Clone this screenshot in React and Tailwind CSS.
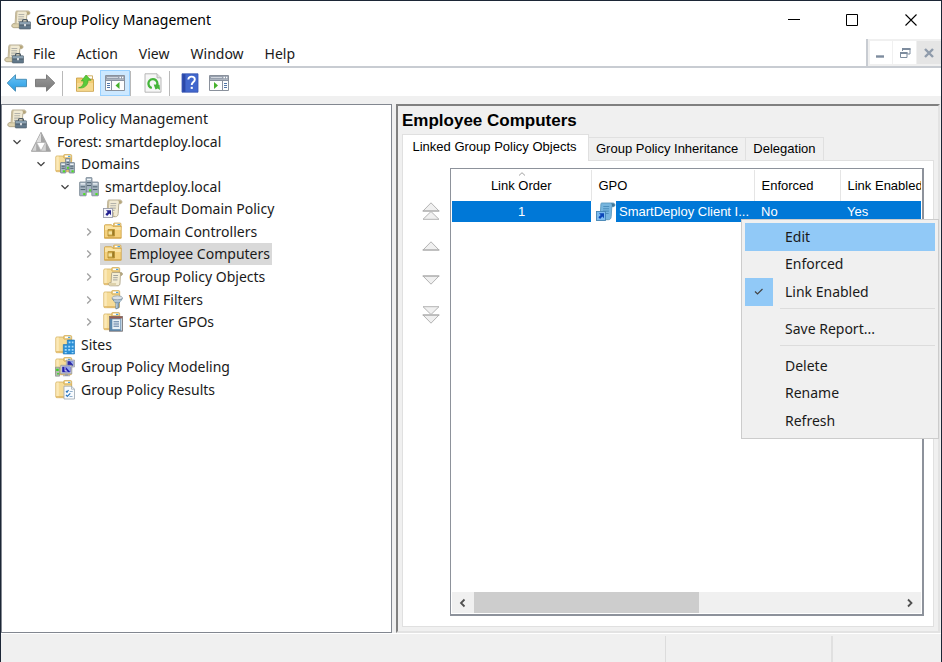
import clsx from 'clsx'

/* ---------- icons ---------- */

function Svg({ size = 'size-5', box = '0 0 20 20', className, children }) {
  return (
    <svg viewBox={box} className={clsx(size, 'shrink-0', className)} fill="none" aria-hidden="true">
      {children}
    </svg>
  )
}

function ScrollShape() {
  return (
    <>
      <path d="M5.5 1h11.300c1.300 0 2.100.8 2.100 1.900s-.8 1.800-1.900 1.800h-1.200l-.6 9.800c-.1 2-1 3.200-2.600 3.200H3c-1.400 0-2.200-.9-2.200-2s.8-2.100 2-2.100h1.300l.6-9.500c0-1.900.3-3.100.8-3.100z" fill="#f1ead3" stroke="#b0a68b" strokeWidth=".9" />
      <path d="M4.900 2.500c0-.8.300-1.500.8-1.500h1.500c-.7.500-.9 1.500-.9 3l-.7 9.700H4.100z" fill="#c9bd9c" />
      <path d="M14.800 1.300c1 .5 1.200 1.700 1.100 3.300l1.500-.1c1-.1 1.500-.8 1.400-1.600-.1-.9-.8-1.500-1.800-1.500z" fill="#b7a77c" />
      <path d="M2.800 13.800h8.200c-.9.900-.8 2.900.6 3.700H3.200c-1.300 0-2-.8-2-1.800s.7-1.900 1.600-1.900z" fill="#ddd2ae" stroke="#a79c7d" strokeWidth=".5" />
      <path d="M7.500 4.500h5.800M7.300 6.800h5.800M7.200 9.100h5.600M7 11.400h4.600" stroke="#b3b2aa" strokeWidth="1.100" />
    </>
  )
}

function ConsoleIcon() {
  return (
    <Svg>
      <ScrollShape />
      <path d="M11.500 12v-1c0-.8.500-1.300 1.300-1.300h2.400c.8 0 1.300.5 1.300 1.300v1" stroke="#4b5862" strokeWidth="1.200" />
      <rect x="8.300" y="11.800" width="11.300" height="7.200" rx=".6" fill="#607789" stroke="#4c5c68" strokeWidth=".6" />
      <path d="M8.700 12.200h10.500v2.500H8.700z" fill="#8ea4b4" />
      <path d="M8.500 15h11" stroke="#465763" strokeWidth=".8" />
      <path d="M13.100 14h1.800v2.200h-1.800z" fill="#e2e5e8" />
    </Svg>
  )
}

function ShortcutArrow({ paper, edge, arrow }) {
  return (
    <>
      <rect x=".5" y="9.500" width="9" height="9" fill={paper} stroke={edge} strokeWidth=".9" />
      <path d="M3 11.200h5v5l-1.600-1.600-2.300 2.300-1.700-1.700 2.300-2.300z" fill={arrow} />
    </>
  )
}

function GpoLinkIcon() {
  return (
    <Svg>
      <ScrollShape />
      <ShortcutArrow paper="#f5f5fa" edge="#9a9ca8" arrow="#22208f" />
    </Svg>
  )
}

// Same link icon, tinted by the selection
function GpoLinkSelectedIcon() {
  return (
    <Svg>
      <path d="M5.500 1h11.300c1.300 0 2.100.8 2.100 1.900s-.8 1.800-1.900 1.800h-1.200l-.6 9.800c-.1 2-1 3.200-2.600 3.200H3.200l1-4.200.6-9.400c0-1.900.2-3.100.7-3.100z" fill="#77b5de" stroke="#5c98bd" strokeWidth=".9" />
      <path d="M14.800 1.300c1 .5 1.200 1.700 1.100 3.300l1.500-.1c1-.1 1.500-.8 1.400-1.600-.1-.9-.8-1.500-1.800-1.500z" fill="#3f7698" />
      <path d="M7.300 4.500h5.900M7.100 6.800H13M6.900 9.100h6M10 11.500h2.600" stroke="#4c8fbd" strokeWidth="1.100" />
      <ShortcutArrow paper="#7dbcf0" edge="#4585b3" arrow="#0c46b8" />
    </Svg>
  )
}

function FolderShape() {
  return (
    <>
      <path d="M8.500 3.500V1.700c0-.7.500-1.200 1.200-1.200h5.800c.7 0 1.200.5 1.200 1.200v5.500H8.500z" fill="#edcb7c" stroke="#cfa955" strokeWidth=".7" />
      <path d="M10 1.500h5.500v1.700H10z" fill="#fff" />
      <path d="M13 1.800h2.300V3H13z" fill="#4ea3dc" />
      <path d="M.8 3c0-.6.4-1 1-1h5.500c.6 0 .9.300 1.100.8l.7 1.400h7.400v12.500c0 .6-.4 1-1 1H1.800c-.6 0-1-.4-1-1z" fill="#f6dc98" stroke="#d3ae5c" strokeWidth=".8" />
      <path d="M1.300 2.900c0-.3.200-.5.500-.5h2v14.800h-2c-.3 0-.5-.2-.5-.5z" fill="#fbe9b8" />
      <path d="M1 16.800h15.500" stroke="#e0b765" strokeWidth="1.200" />
    </>
  )
}

function OuIcon() {
  return (
    <Svg>
      <path d="M10.500 3.500V1.900c0-.5.400-.9.900-.9h5.700c.5 0 .9.400.9.900v3.500h-7.500z" fill="#edcb7c" stroke="#cba24a" strokeWidth=".7" />
      <path d="M12 1.800h5.200v1.500H12z" fill="#fff" />
      <path d="M14.500 2H17v1.200h-2.500z" fill="#4ea3dc" />
      <path d="M1.500 3.500c0-.5.300-.8.800-.8h6.200L10 4.200h8.200v12H1.500z" fill="#f5d17c" stroke="#cc9f43" strokeWidth=".8" />
      <path d="M2 3.700h6L9.500 5h8.200v3H2z" fill="#fae3a5" />
      <path d="M1.700 15.800h16.400" stroke="#d3a549" strokeWidth="1" />
      <path d="M5 7.500h6.500V14H5z" fill="#cfa947" stroke="#b18a2d" strokeWidth=".8" />
      <path d="M5.500 9.300H9v3.200H5.500z" fill="#f5e3a0" />
      <path d="M9.300 8h1.700v5.500H9.300z" fill="#9a7a25" />
    </Svg>
  )
}

function Tower({ x, y, w, h }) {
  return (
    <g>
      <rect x={x} y={y} width={w} height={h} rx=".5" fill="#a7b6c2" stroke="#6b7a87" strokeWidth=".7" />
      <path d={`M${x + 1} ${y + 1.2}h${w - 2}v1.300h-${w - 2}z`} fill="#eef3f6" />
      <path d={`M${x + 1} ${y + h * 0.35}h${w - 2}M${x + 1} ${y + h * 0.55}h${w - 2}`} stroke="#4d5f6e" strokeWidth="1" />
      <rect x={x + w - 3} y={y + h - 2.7} width="2.200" height="2" fill="#4be01f" />
    </g>
  )
}

function DomainIcon() {
  return (
    <Svg>
      <Tower x={7} y={0.6} w={6} h={14.5} />
      <Tower x={0.6} y={5} w={6.6} h={13.8} />
      <Tower x={12.8} y={5} w={6.6} h={13.8} />
    </Svg>
  )
}

function DomainsIcon() {
  return (
    <Svg>
      <FolderShape />
      <Tower x={10.5} y={4.500} w={4.5} h={11} />
      <Tower x={5.5} y={8.500} w={5.3} h={10.5} />
      <Tower x={14.200} y={8.500} w={5.3} h={10.5} />
    </Svg>
  )
}

function ForestIcon() {
  return (
    <Svg>
      <path d="M10 .3 19.600 19.300H.4z" fill="#d4d4d4" stroke="#8f8f8f" strokeWidth=".8" />
      <path d="M10 1 14.700 10.300H10z" fill="#a5a5a5" />
      <path d="M10 1 5.300 10.300H10z" fill="#dedede" />
      <path d="M5.200 10.500 9.800 19H5.200z" fill="#a9a9a9" />
      <path d="M14.800 10.500 19.200 19h-4.400z" fill="#a2a2a2" />
      <path d="M5.600 10.500h8.800L10 18.800z" fill="#fff" stroke="#a0a0a0" strokeWidth=".6" />
    </Svg>
  )
}

function GpoFolderIcon() {
  return (
    <Svg>
      <FolderShape />
      <path d="M9.200 5.500h8.700c1 0 1.600.6 1.600 1.500s-.6 1.500-1.500 1.500h-.6l-.4 7.700c-.1 1.700-.8 2.600-2 2.600H7.300c-1 0-1.700-.7-1.700-1.500s.6-1.600 1.600-1.600h.9l.4-7.700c0-1.400.2-2.500.7-2.500z" fill="#f4edd3" stroke="#a69b7d" strokeWidth=".8" />
      <path d="M16.300 5.800c.8.500.9 1.500.9 2.700h.8c.8 0 1.300-.6 1.300-1.400s-.5-1.300-1.300-1.300z" fill="#b3a57c" />
      <path d="M10.300 8.500h4.700M10.200 10.700h4.500M10 12.900h4.500" stroke="#a3a49f" strokeWidth="1" />
      <path d="M7.300 15.900h6c-.6.800-.5 2 .4 2.700H7.500c-.9 0-1.500-.6-1.500-1.300s.5-1.400 1.300-1.400z" fill="#ddd1aa" />
    </Svg>
  )
}

function WmiIcon() {
  return (
    <Svg>
      <FolderShape />
      <path d="M9 8.500h10.500l-3.700 5v4.300L12.900 19v-5.500z" fill="#86a2b8" stroke="#5f7c92" strokeWidth=".7" />
      <path d="M13.300 13.500 13.300 18.300 14.300 17.800V13z" fill="#cddbe6" />
      <ellipse cx="14.300" cy="7.800" rx="5.200" ry="2" fill="#dbe2e7" stroke="#8797a4" strokeWidth=".7" />
      <path d="M11 11h7" stroke="#d3e1eb" strokeWidth="1" />
    </Svg>
  )
}

function StarterIcon() {
  return (
    <Svg>
      <FolderShape />
      <rect x="6.500" y="4.500" width="13" height="14.700" fill="#5b87ad" stroke="#7c7472" strokeWidth=".8" />
      <path d="M6.800 4.500h12.500v2H6.800z" fill="#9b5e50" />
      <path d="M9.300 7.300h7.900v9.900H9.300z" fill="#eaf1f7" />
      <path d="M10.500 9.800h5.500M10.500 12h5.500M10.500 14.200h5.500" stroke="#54759c" strokeWidth="1" />
      <path d="M18.300 6.500v12" stroke="#dfe6ec" strokeWidth="1" />
    </Svg>
  )
}

function SitesIcon() {
  return (
    <Svg>
      <FolderShape />
      <path d="M12.300 5h7.200v14H8.300V9.500h4z" fill="#2a8fd6" stroke="#1b72b5" strokeWidth=".6" />
      <path d="M13.700 6.500h1.800v1.700h-1.800zM16.800 6.500h1.700v1.700h-1.700zM9.700 10.800h2v1.800h-2zM13.200 10.800h2v1.800h-2zM16.700 10.800h1.800v1.800h-1.800zM9.700 14h2v1.800h-2zM13.200 14h2v1.800h-2zM16.700 14h1.800v1.800h-1.800zM9.700 17h2v1.200h-2zM16.700 17h1.800v1.200h-1.800z" fill="#a3dafc" />
    </Svg>
  )
}

function ModelingIcon() {
  return (
    <Svg>
      <FolderShape />
      <path d="M11.300 3h8.200v7h-8.200z" fill="#c9ccd2" stroke="#8f9299" strokeWidth=".6" />
      <path d="M12.500 4.200h5.700v4.500h-5.700z" fill="#2a28a6" />
      <path d="m15 4.200 3.200 3.800V4.200z" fill="#9cb0ee" />
      <path d="M.5 10.200h4v9h-4z" fill="#b4bcb3" stroke="#7b857d" strokeWidth=".6" />
      <path d="M1.200 11.700h2.500v2.200H1.200zM2.200 16h1.600v1.600H2.200z" fill="#39d421" />
      <path d="M5.800 8.300h11v8.500h-11z" fill="#d5d7dc" stroke="#8a8e96" strokeWidth=".7" />
      <path d="M7.200 9.700h8.200v5.600H7.200z" fill="#211fae" />
      <path d="m10.500 9.800 4.700 5.200V9.800z" fill="#8fa2ec" />
      <path d="m10 9.900.1 4.400 1.100-1 1 1.800" stroke="#fff" strokeWidth=".8" />
      <path d="M10 17h3v1.200h2v1H8v-1h2z" fill="#9da0a6" />
    </Svg>
  )
}

function ResultsIcon() {
  return (
    <Svg>
      <FolderShape />
      <path d="M9 6.200h7.500l3 3V19H9z" fill="#f8fbfe" stroke="#9aa5af" strokeWidth=".8" />
      <path d="M16.500 6.200v3h3" stroke="#9aa5af" strokeWidth=".7" />
      <path d="m11 11 1 1.200 1.500-2.200M11 14.800l1.300 1.500 3-3" stroke="#2b76bd" strokeWidth="1.200" />
      <path d="M14.700 11.500h3M14.500 16.500h3" stroke="#86a7c6" strokeWidth=".9" />
    </Svg>
  )
}

function ArrowIcon({ flip, id, from, to, edge }) {
  return (
    <Svg size="w-[22px] h-5" box="0 0 22 20" className={flip && '-scale-x-100'}>
      <defs>
        <linearGradient id={id} x1="0" y1="0" x2="0" y2="1">
          <stop offset="0" stopColor={from} />
          <stop offset="1" stopColor={to} />
        </linearGradient>
      </defs>
      <path d="M1.200 10 9.500 1.800v4.500h11v7.400h-11v4.500z" fill={`url(#${id})`} stroke={edge} strokeLinejoin="round" />
    </Svg>
  )
}

function UpFolderIcon() {
  return (
    <Svg>
      <path d="M11.500 4.500V2.800h6V6h-6z" fill="#fff" stroke="#c79f45" strokeWidth=".8" />
      <path d="M1.500 5h6L9 6.500h9.500v11.800h-17z" fill="#f2cd74" stroke="#c69a3e" strokeWidth=".8" />
      <path d="M2 10h16v7.800H2z" fill="#f6d990" />
      <path d="M3.500 14.800c3.500-.6 5.200-3.300 5.300-6.800H6.300L11 2l5 5.300h-3c.3 4.600-3.500 8.700-9.500 7.500z" fill="#5bcb3a" stroke="#3ba324" strokeWidth=".6" />
    </Svg>
  )
}

function PaneIcon({ right }) {
  return (
    <Svg size="w-[22px] h-5" box="0 0 22 20">
      <path d="M1.500 2.500h19v15h-19z" fill="#fdfdfd" stroke="#8a919c" />
      <path d="M2 3h18v3.800H2z" fill="#97a0ae" />
      <path d="M3 4.500h11" stroke="#d0d5dd" />
      <path d="M15.500 3.700h1.500v1.500h-1.500zM18 3.700h1.300v1.500H18z" fill="#fff" />
      <path d="M2 7.500h18" stroke="#8991a0" />
      {right ? (
        <>
          <path d="M14.500 7v10.500" stroke="#8991a0" />
          <path d="M16 10.500h3M16 12.500h3M16 14.500h3" stroke="#5175a8" />
          <path d="m6 9 4 3.500L6 16z" fill="#46b22c" />
        </>
      ) : (
        <>
          <path d="M7.500 7v10.500" stroke="#8991a0" />
          <path d="M3 10.500h3M3 12.500h3M3 14.500h3" stroke="#5175a8" />
          <path d="m15.500 9-4 3.500 4 3.500z" fill="#46b22c" />
        </>
      )}
    </Svg>
  )
}

function RefreshIcon() {
  return (
    <Svg>
      <path d="M2 .8h12l4 4v14.400H2z" fill="#f6f6f6" stroke="#b0b0b0" strokeWidth=".9" />
      <path d="M14 .8v4h4" fill="#e2e2e2" stroke="#b0b0b0" strokeWidth=".8" />
      <path d="M8.800 15a4.500 4.500 0 1 1 5.200-2.500" stroke="#45b53a" strokeWidth="2.300" />
      <path d="m10.700 11.500 5.800.2.500 5.300-2.200-1.500-2.300 1z" fill="#45b53a" />
    </Svg>
  )
}

function HelpIcon() {
  return (
    <Svg>
      <path d="M2 .8h16v18.400H2z" fill="#4167cd" stroke="#3553ae" strokeWidth=".8" />
      <path d="M2.400 1.200h3v17.600h-3z" fill="#2b48a8" />
      <path d="M8.300 6.500c.2-1.900 1.500-2.900 3.300-2.900 1.900 0 3.200 1 3.200 2.800 0 2.600-3.100 2.600-3.100 5.600" stroke="#fff" strokeWidth="1.900" />
      <path d="M10.700 13.800h2.100v2.100h-2.100z" fill="#fff" />
    </Svg>
  )
}

function Chevron({ open }) {
  return (
    <Svg size="size-3" box="0 0 12 12">
      {open ? (
        <path d="m2.500 4.200 3.500 3.500 3.500-3.500" stroke="#404040" strokeWidth="1.300" />
      ) : (
        <path d="m4.200 2.500 3.500 3.500-3.500 3.500" stroke="#a0a0a0" strokeWidth="1.300" />
      )}
    </Svg>
  )
}

function OrderIcon({ down, double }) {
  return (
    <Svg size={double ? 'w-5 h-[18px]' : 'w-5 h-[10px]'} box={double ? '0 0 20 18' : '0 0 20 10'} className={down && 'rotate-180'}>
      <path d="M10 .8 18 9H2z" fill="#f0f0f0" stroke="#b3b3b3" />
      <path d="M1.500 9h17" stroke="#a8a8a8" />
      {double && <path d="M10 9.500 18 17.300H2z" fill="#f0f0f0" stroke="#b3b3b3" />}
    </Svg>
  )
}

/* ---------- data ---------- */

const indents = ['pl-[2px]', 'pl-[5px]', 'pl-[29px]', 'pl-[53px]', 'pl-[77px]']

const tree = [
  { label: 'Group Policy Management', level: 0, icon: ConsoleIcon },
  { label: 'Forest: smartdeploy.local', level: 1, icon: ForestIcon, state: 'open' },
  { label: 'Domains', level: 2, icon: DomainsIcon, state: 'open' },
  { label: 'smartdeploy.local', level: 3, icon: DomainIcon, state: 'open' },
  { label: 'Default Domain Policy', level: 4, icon: GpoLinkIcon },
  { label: 'Domain Controllers', level: 4, icon: OuIcon, state: 'closed' },
  { label: 'Employee Computers', level: 4, icon: OuIcon, state: 'closed', selected: true },
  { label: 'Group Policy Objects', level: 4, icon: GpoFolderIcon, state: 'closed' },
  { label: 'WMI Filters', level: 4, icon: WmiIcon, state: 'closed' },
  { label: 'Starter GPOs', level: 4, icon: StarterIcon, state: 'closed' },
  { label: 'Sites', level: 2, icon: SitesIcon },
  { label: 'Group Policy Modeling', level: 2, icon: ModelingIcon },
  { label: 'Group Policy Results', level: 2, icon: ResultsIcon },
]

const menus = ['File', 'Action', 'View', 'Window', 'Help']

const contextGroups = [
  [{ label: 'Edit', active: true }, { label: 'Enforced' }, { label: 'Link Enabled', checked: true }],
  [{ label: 'Save Report...' }],
  [{ label: 'Delete' }, { label: 'Rename' }, { label: 'Refresh' }],
]

/* ---------- sections ---------- */

function TitleBar() {
  return (
    <header className="flex h-[38px] shrink-0 items-center bg-white pl-[10px]">
      <ConsoleIcon />
      <h1 className="ml-[5px] flex-1 text-black">Group Policy Management</h1>
      <button aria-label="Minimize" className="flex w-[58px] justify-center">
        <Svg size="size-3" box="0 0 12 12"><path d="M0 5.500h12" stroke="#000" /></Svg>
      </button>
      <button aria-label="Maximize" className="flex w-[58px] justify-center">
        <Svg size="size-3" box="0 0 12 12"><path d="M.5.5h11v11H.5z" stroke="#000" /></Svg>
      </button>
      <button aria-label="Close" className="flex w-[60px] justify-center">
        <Svg size="size-3" box="0 0 12 12"><path d="m.5.5 11 11m0-11-11 11" stroke="#000" strokeWidth="1.100" /></Svg>
      </button>
    </header>
  )
}

function MenuBar() {
  return (
    <div className="flex h-[29px] shrink-0 border-b-2 border-[#c8ccd2] bg-white">
      <nav className="flex flex-1 items-center border-r-2 border-[#c8ccd2] pt-[2px] pl-[3px]">
        <ConsoleIcon />
        <div className="ml-[9px] flex gap-[21px]">
          {menus.map((m) => (
            <button key={m}>{m}</button>
          ))}
        </div>
      </nav>
      <div className="flex gap-px bg-[#f0f0f0] pt-[2px] pb-[2px] pl-[2px]">
        <button aria-label="Minimize console" className="flex w-[22px] items-center justify-center bg-white">
          <Svg size="size-3" box="0 0 12 12"><path d="M1 9.500h8" stroke="#7d8c9e" strokeWidth="2.400" /></Svg>
        </button>
        <button aria-label="Restore console" className="flex w-[23px] items-center justify-center bg-white">
          <Svg size="size-3" box="0 0 12 12">
            <path d="M3.500 4V1.500h7.500v5.500H8.500" stroke="#7d8c9e" />
            <path d="M3 2h8.500" stroke="#7d8c9e" strokeWidth="2" />
            <path d="M1.500 5.500h6.500v5H1.500z" stroke="#7d8c9e" />
            <path d="M1 6h7.500" stroke="#7d8c9e" strokeWidth="2" />
          </Svg>
        </button>
        <button aria-label="Close console" className="flex w-6 items-center justify-center bg-[#e5e5e5]">
          <Svg size="size-3" box="0 0 12 12"><path d="m2 2 8 8m0-8-8 8" stroke="#8f9bab" strokeWidth="2.400" /></Svg>
        </button>
      </div>
    </div>
  )
}

function Toolbar() {
  const divider = <span className="h-[25px] w-px bg-[#b9b9b9]" />
  return (
    <div className="flex h-7 shrink-0 items-center bg-white pt-[2px] pl-[5px]">
      <button aria-label="Back"><ArrowIcon id="back" from="#6cc4f5" to="#249ae3" edge="#4a90b8" /></button>
      <button aria-label="Forward" className="mr-[6px] ml-[6px]">
        <ArrowIcon id="forward" flip from="#9a9a9a" to="#777777" edge="#7c7c7c" />
      </button>
      {divider}
      <button aria-label="Up one level" className="mr-[5px] ml-3"><UpFolderIcon /></button>
      <button aria-label="Show console tree" className="flex h-[26px] w-[30px] items-center justify-center border border-[#99d1ff] bg-[#cce8ff]">
        <PaneIcon />
      </button>
      {divider}
      <button aria-label="Refresh" className="mr-[6px] ml-3"><RefreshIcon /></button>
      {divider}
      <button aria-label="Help" className="mr-2 ml-[10px]"><HelpIcon /></button>
      <button aria-label="Show action pane"><PaneIcon right /></button>
    </div>
  )
}

function ConsoleTree() {
  return (
    <nav aria-label="Console tree" className="w-[391px] shrink-0 border border-[#828790] bg-white pt-[3px]">
      <ul className="grid h-[293px] auto-rows-fr">
        {tree.map(({ label, level, icon: Icon, state, selected }) => (
          <li key={label} className={clsx('flex items-center', indents[level])}>
            {level > 0 && (
              <span className="flex w-[21px] justify-center pr-[2px]">{state && <Chevron open={state === 'open'} />}</span>
            )}
            <button
              className={clsx(
                'flex h-[22px] items-center gap-[6px] pr-[2px] pl-[3px] whitespace-nowrap',
                selected && 'bg-[#d9d9d9]'
              )}
            >
              <Icon />
              {label}
            </button>
          </li>
        ))}
      </ul>
    </nav>
  )
}

function LinkTable() {
  return (
    <div className="flex min-w-0 flex-1 flex-col border-2 border-t border-l border-[#8d929b] bg-white p-px">
      <div className="flex-1 overflow-hidden">
        <table className="w-[560px] table-fixed border-collapse text-left">
          <colgroup>
            <col className="w-[139px]" />
            <col className="w-[163px]" />
            <col className="w-[86px]" />
            <col />
          </colgroup>
          <thead>
            <tr className="h-[31px]">
              <th className="relative border-r border-[#e5e5e5] text-center font-normal">
                <Svg size="w-2 h-1" box="0 0 8 4" className="absolute top-[2px] left-[66px]">
                  <path d="M1 3.500 4 .7l3 2.800" stroke="#8a8a8a" strokeWidth=".8" />
                </Svg>
                Link Order
              </th>
              <th className="border-r border-[#e5e5e5] pl-[7px] font-normal">GPO</th>
              <th className="border-r border-[#e5e5e5] pl-[7px] font-normal">Enforced</th>
              <th className="pl-[7px] font-normal">Link Enabled</th>
            </tr>
          </thead>
          <tbody>
            <tr className="h-[21px] bg-[#0078d7] text-white">
              <td className="text-center">1</td>
              <td className="bg-white">
                <div className="flex h-[21px] items-center pl-[5px]">
                  <GpoLinkSelectedIcon />
                  <span className="flex h-full flex-1 items-center bg-[#0078d7] pl-[3px] whitespace-nowrap">
                    SmartDeploy Client I...
                  </span>
                </div>
              </td>
              <td className="pl-[7px]">No</td>
              <td className="pl-[7px]">Yes</td>
            </tr>
          </tbody>
        </table>
      </div>
      {/* Horizontal scrollbar */}
      <div className="flex h-[21px] bg-[#f0f0f0]">
        <button aria-label="Scroll left" className="flex w-[22px] items-center justify-center">
          <Svg size="size-3" box="0 0 12 12"><path d="M7.500 2.500 4 6l3.500 3.500" stroke="#505050" strokeWidth="1.800" /></Svg>
        </button>
        <div className="flex-1">
          <div className="h-full w-[53%] bg-[#cdcdcd]" />
        </div>
        <button aria-label="Scroll right" className="flex w-[22px] items-center justify-center">
          <Svg size="size-3" box="0 0 12 12"><path d="M4 2.500 7.500 6 4 9.500" stroke="#505050" strokeWidth="1.800" /></Svg>
        </button>
      </div>
    </div>
  )
}

function DetailsPane() {
  return (
    <main className="flex min-w-0 flex-1 flex-col border-2 border-[#808080] border-r-[#e3e3e3] border-b-[#e3e3e3] bg-[#f0f0f0] pr-1 pb-1 pl-1 font-['Liberation_Sans',sans-serif] text-[13px] text-black">
      <h2 className="pt-[3px] text-[17px] leading-6 font-bold">Employee Computers</h2>
      <div role="tablist" className="flex h-[27px] items-end">
        <button role="tab" aria-selected="true" className="z-10 -mb-px h-[27px] w-[187px] border border-b-0 border-[#e0e0e0] bg-white pr-[2px] pb-[2px] whitespace-nowrap">
          Linked Group Policy Objects
        </button>
        <button role="tab" className="h-[23px] border border-b-0 border-l-0 border-[#e0e0e0] px-[7px] whitespace-nowrap">
          Group Policy Inheritance
        </button>
        <button role="tab" className="h-[23px] border border-b-0 border-l-0 border-[#e0e0e0] px-[7px] whitespace-nowrap">
          Delegation
        </button>
      </div>
      <div className="flex min-h-0 flex-1 border border-[#e0e0e0] bg-white pt-[7px] pr-[9px] pb-[10px]">
        <div className="flex w-[47px] flex-col items-center pt-[34px] pl-[9px]">
          <button aria-label="Move link to top"><OrderIcon double /></button>
          <button aria-label="Move link up" className="mt-[21px]"><OrderIcon /></button>
          <button aria-label="Move link down" className="mt-6"><OrderIcon down /></button>
          <button aria-label="Move link to bottom" className="mt-[21px]"><OrderIcon down double /></button>
        </div>
        <LinkTable />
      </div>
    </main>
  )
}

function ContextMenu() {
  return (
    <div role="menu" className="absolute top-[218px] right-[2px] z-20 w-[198px] border border-[#cccccc] bg-[#f0f0f0] p-[3px]">
      {contextGroups.map((group, i) => (
        <div key={i}>
          {i > 0 && <div className="mt-[2px] mb-[6px] ml-[35px] h-px bg-[#dcdcdc]" />}
          <div className={clsx('grid auto-rows-fr', group.length === 3 ? 'h-[83px]' : 'h-7')}>
            {group.map((item) => (
              <button
                key={item.label}
                role="menuitem"
                className={clsx('flex items-center text-left', item.active && 'bg-[#91c9f7]')}
              >
                <span className={clsx('mr-3 flex h-full w-7 items-center justify-center', item.checked && 'bg-[#91c9f7]')}>
                  {item.checked && (
                    <Svg size="size-3" box="0 0 12 12"><path d="m2 5.500 2.500 2.500L9.500 3" stroke="#444" strokeWidth="1.200" /></Svg>
                  )}
                </span>
                {item.label}
              </button>
            ))}
          </div>
        </div>
      ))}
    </div>
  )
}

export default function App() {
  return (
    <div className="relative flex h-screen flex-col overflow-hidden border border-b-0 border-[#1c2636] bg-[#f0f0f0] font-['Noto_Sans','Open_Sans',sans-serif] text-[14px] leading-5 text-[#1a1a1a]">
      <TitleBar />
      <MenuBar />
      <Toolbar />
      <div className="flex min-h-0 flex-1 gap-1 pt-2 pr-px">
        <ConsoleTree />
        <DetailsPane />
      </div>
      <footer className="flex h-[29px] shrink-0 border-t border-white pt-[2px]">
        <div className="flex-1 border-r border-[#dcdcdc]" />
        <div className="w-[167px] border-r-2 border-[#e0e0e0]" />
        <div className="w-[108px]" />
      </footer>
      <ContextMenu />
    </div>
  )
}
